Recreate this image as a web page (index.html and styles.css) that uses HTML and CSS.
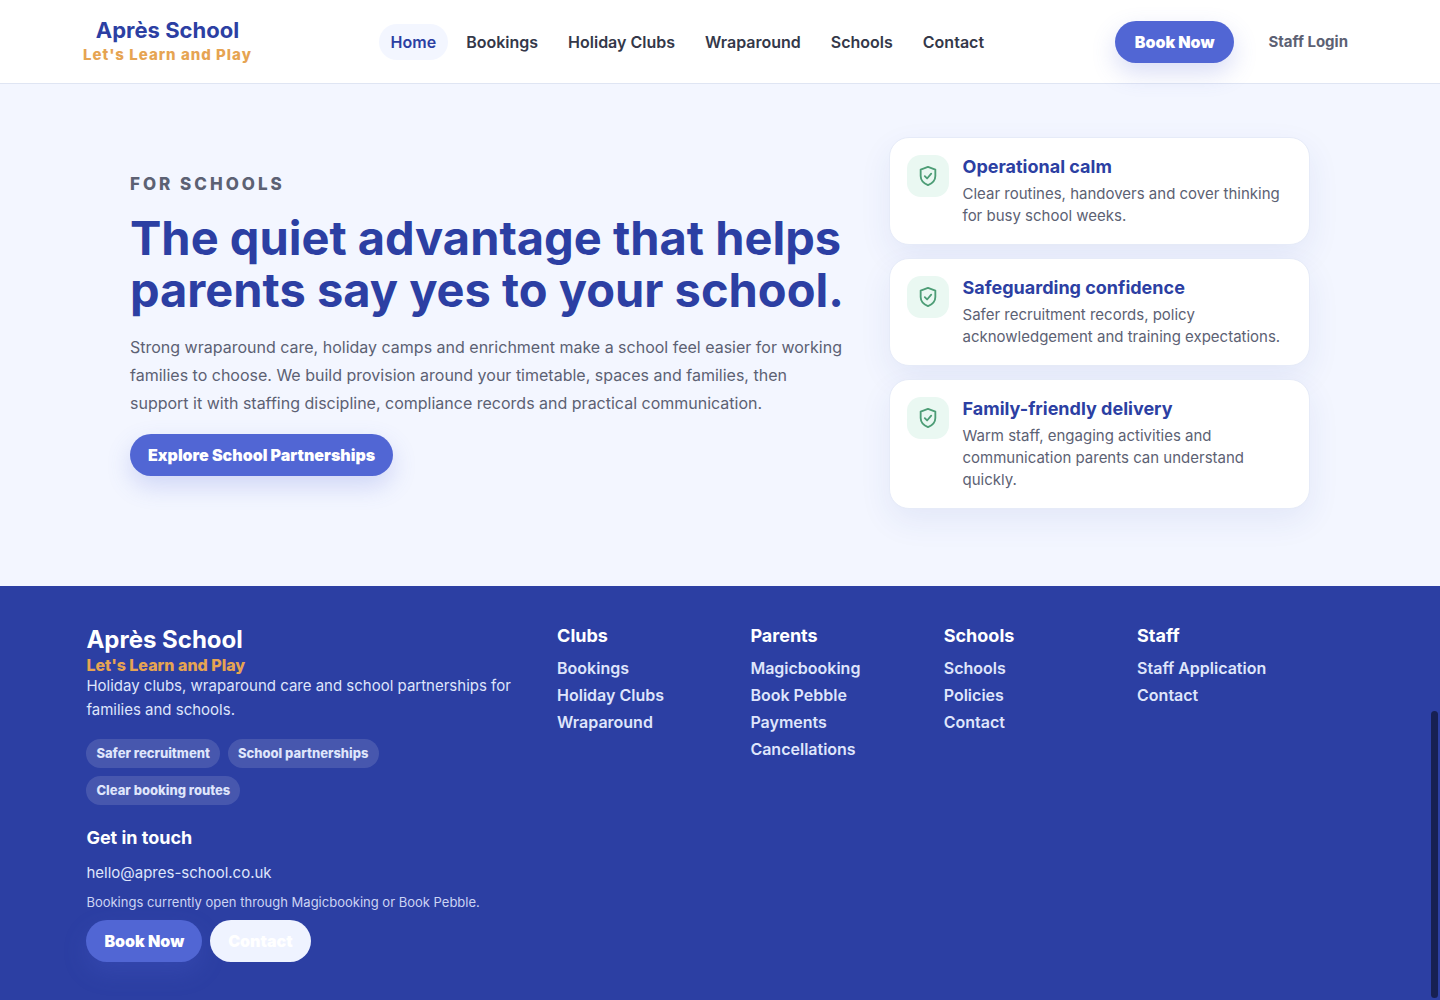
FILE: index.html
```html
<!DOCTYPE html>
<html lang="en">
<head>
    <meta charset="UTF-8">
    <meta name="viewport" content="width=device-width, initial-scale=1.0">
    <title>Après School</title>
    <link rel="stylesheet" href="styles.css">
</head>
<body>
    <header class="site-header">
        <a class="brand" href="#">
            <span class="brand-name">Après School</span>
            <span class="brand-tagline">Let's Learn and Play</span>
        </a>
        <nav class="main-nav">
            <a class="active" href="#">Home</a>
            <a href="#">Bookings</a>
            <a href="#">Holiday Clubs</a>
            <a href="#">Wraparound</a>
            <a href="#">Schools</a>
            <a href="#">Contact</a>
        </nav>
        <div class="header-actions">
            <a class="btn btn-header" href="#">Book Now</a>
            <a class="staff-login" href="#">Staff Login</a>
        </div>
    </header>

    <main class="schools">
        <div class="schools-inner">
            <div class="schools-copy">
                <p class="eyebrow">For Schools</p>
                <h2>The quiet advantage that helps parents say yes to your school.</h2>
                <p class="lead">Strong wraparound care, holiday camps and enrichment make a school feel easier for working families to choose. We build provision around your timetable, spaces and families, then support it with staffing discipline, compliance records and practical communication.</p>
                <a class="btn" href="#">Explore School Partnerships</a>
            </div>
            <div class="cards">
                <article class="card">
                    <span class="card-icon">
                        <svg viewBox="0 0 24 24" aria-hidden="true"><path d="M12 2 4 5v7c0 4.700 3.300 8 8 10 4.700-2 8-5.300 8-10V5z"/><path d="m8.500 12.200 2.500 2.500 4.500-5.200"/></svg>
                    </span>
                    <div>
                        <h3>Operational calm</h3>
                        <p>Clear routines, handovers and cover thinking for busy school weeks.</p>
                    </div>
                </article>
                <article class="card">
                    <span class="card-icon">
                        <svg viewBox="0 0 24 24" aria-hidden="true"><path d="M12 2 4 5v7c0 4.700 3.300 8 8 10 4.700-2 8-5.300 8-10V5z"/><path d="m8.500 12.200 2.500 2.500 4.500-5.200"/></svg>
                    </span>
                    <div>
                        <h3>Safeguarding confidence</h3>
                        <p>Safer recruitment records, policy acknowledgement and training expectations.</p>
                    </div>
                </article>
                <article class="card">
                    <span class="card-icon">
                        <svg viewBox="0 0 24 24" aria-hidden="true"><path d="M12 2 4 5v7c0 4.700 3.300 8 8 10 4.700-2 8-5.300 8-10V5z"/><path d="m8.500 12.200 2.500 2.500 4.500-5.200"/></svg>
                    </span>
                    <div>
                        <h3>Family-friendly delivery</h3>
                        <p>Warm staff, engaging activities and communication parents can understand quickly.</p>
                    </div>
                </article>
            </div>
        </div>
    </main>

    <footer class="site-footer">
        <div class="footer-grid">
            <div class="footer-about">
                <div class="footer-name">Après School</div>
                <div class="footer-tagline">Let's Learn and Play</div>
                <p class="footer-text">Holiday clubs, wraparound care and school partnerships for families and schools.</p>
                <div class="chips">
                    <span>Safer recruitment</span>
                    <span>School partnerships</span>
                    <span>Clear booking routes</span>
                </div>
                <h3>Get in touch</h3>
                <a class="footer-email" href="mailto:hello@apres-school.co.uk">hello@apres-school.co.uk</a>
                <p class="footer-note">Bookings currently open through Magicbooking or Book Pebble.</p>
                <div class="footer-actions">
                    <a class="btn" href="#">Book Now</a>
                    <a class="btn btn-light" href="#">Contact</a>
                </div>
            </div>
            <div class="footer-col">
                <h3>Clubs</h3>
                <a href="#">Bookings</a>
                <a href="#">Holiday Clubs</a>
                <a href="#">Wraparound</a>
            </div>
            <div class="footer-col">
                <h3>Parents</h3>
                <a href="#">Magicbooking</a>
                <a href="#">Book Pebble</a>
                <a href="#">Payments</a>
                <a href="#">Cancellations</a>
            </div>
            <div class="footer-col">
                <h3>Schools</h3>
                <a href="#">Schools</a>
                <a href="#">Policies</a>
                <a href="#">Contact</a>
            </div>
            <div class="footer-col">
                <h3>Staff</h3>
                <a href="#">Staff Application</a>
                <a href="#">Contact</a>
            </div>
        </div>
    </footer>

    <div class="scroll-thumb"></div>
</body>
</html>
```
FILE: styles.css
```css
* {
    box-sizing: border-box;
}
body {
    margin: 0;
    min-height: 100vh;
    display: flex;
    flex-direction: column;
    font-family: Inter, "Liberation Sans", sans-serif;
    font-size: 16px;
    line-height: 24px;
    color: #5c6173;
    background: #f3f6ff;
}
h2, h3, p {
    margin: 0;
}
a {
    color: inherit;
    text-decoration: none;
}

/* Header */
.site-header {
    display: flex;
    align-items: center;
    justify-content: space-between;
    height: 84px;
    padding: 0 80px;
    background: #fff;
    border-bottom: 1px solid #dfe5f3;
}
.brand {
    display: flex;
    flex-direction: column;
    align-items: center;
    padding: 0 8px 0 3px;
}
.brand-name {
    font-size: 22px;
    font-weight: 700;
    line-height: 26px;
    color: #2c3fa3;
}
.brand-tagline {
    font-size: 15px;
    font-weight: 800;
    line-height: 24px;
    letter-spacing: 1px;
    color: #e6a452;
}
.main-nav {
    display: flex;
    gap: 6px;
}
.main-nav a {
    padding: 6px 12px;
    border-radius: 18px;
    font-weight: 600;
    color: #343849;
}
.main-nav .active {
    color: #2c3fa3;
    background: #f3f6ff;
}
.header-actions {
    display: flex;
    align-items: center;
    gap: 22px;
}
.staff-login {
    padding: 0 12px;
    font-size: 15px;
    font-weight: 700;
}
.btn {
    display: inline-block;
    padding: 9px 18px;
    border-radius: 21px;
    font-weight: 900;
    color: #fff;
    background: #5166d4;
    box-shadow: 0 10px 24px rgba(81, 102, 212, 0.22);
}
.btn-header {
    padding: 9px 20px;
}

/* For schools */
.schools {
    padding: 53px 40px 77px;
}
.schools-inner {
    display: grid;
    grid-template-columns: 12fr 7fr;
    gap: 36px;
    align-items: center;
    max-width: 1180px;
    margin: 0 auto;
}
.schools-copy {
    padding-top: 2px;
}
.eyebrow {
    margin-bottom: 16px;
    font-size: 17px;
    font-weight: 800;
    letter-spacing: 3px;
    text-transform: uppercase;
}
.schools h2 {
    margin-bottom: 17px;
    font-size: 47px;
    font-weight: 700;
    line-height: 52px;
    color: #2c3fa3;
}
.lead {
    max-width: 716px;
    margin-bottom: 17px;
    font-size: 16px;
    line-height: 28px;
}
.cards {
    display: grid;
    gap: 13px;
}
.card {
    display: flex;
    gap: 14px;
    padding: 17px;
    border: 1px solid #e6ebf8;
    border-radius: 20px;
    background: #fff;
    box-shadow: 0 12px 32px rgba(44, 63, 163, 0.08);
}
.card-icon {
    flex: none;
    display: grid;
    place-items: center;
    width: 42px;
    height: 42px;
    border-radius: 14px;
    background: #eaf8f2;
}
.card-icon svg {
    width: 22px;
    height: 22px;
    fill: none;
    stroke: #4d9d76;
    stroke-width: 2;
    stroke-linecap: round;
    stroke-linejoin: round;
}
.card h3 {
    margin-bottom: 4px;
    font-size: 18px;
    font-weight: 700;
    line-height: 24px;
    color: #2c3fa3;
}
.card p {
    font-size: 15px;
    line-height: 22px;
}

/* Footer */
.site-footer {
    flex: 1;
    padding: 38px 9% 38px 6%;
    color: #dfe5fb;
    background: #2c3fa3;
}
.footer-grid {
    display: grid;
    grid-template-columns: 13fr repeat(4, 5fr);
    gap: 20px;
}
.site-footer h3 {
    font-size: 18px;
    font-weight: 700;
    line-height: 24px;
    color: #fff;
}
.footer-name {
    font-size: 24px;
    font-weight: 700;
    line-height: 32px;
    color: #fff;
}
.footer-tagline {
    font-weight: 800;
    line-height: 18px;
    color: #e6a452;
}
.footer-text {
    font-size: 15px;
}
.chips {
    display: flex;
    flex-wrap: wrap;
    gap: 8px;
    margin: 17px 0 21px;
}
.chips span {
    padding: 4px 10px;
    border-radius: 15px;
    font-size: 13px;
    font-weight: 800;
    line-height: 21px;
    background: rgba(255, 255, 255, 0.13);
}
.footer-email {
    display: block;
    margin-top: 11px;
    font-size: 15px;
}
.footer-note {
    margin: 7px 0 8px;
    font-size: 13px;
    line-height: 20px;
    color: #ccd4f4;
}
.footer-actions {
    display: flex;
    gap: 8px;
}
.btn-light {
    background: #eff3ff;
    box-shadow: none;
}
.footer-col h3 {
    margin-bottom: 7px;
}
.footer-col a {
    display: block;
    font-weight: 600;
    line-height: 27px;
}

.scroll-thumb {
    position: fixed;
    right: 2px;
    bottom: 2px;
    width: 7px;
    height: 287px;
    border-radius: 4px;
    background: #172052;
}
```
